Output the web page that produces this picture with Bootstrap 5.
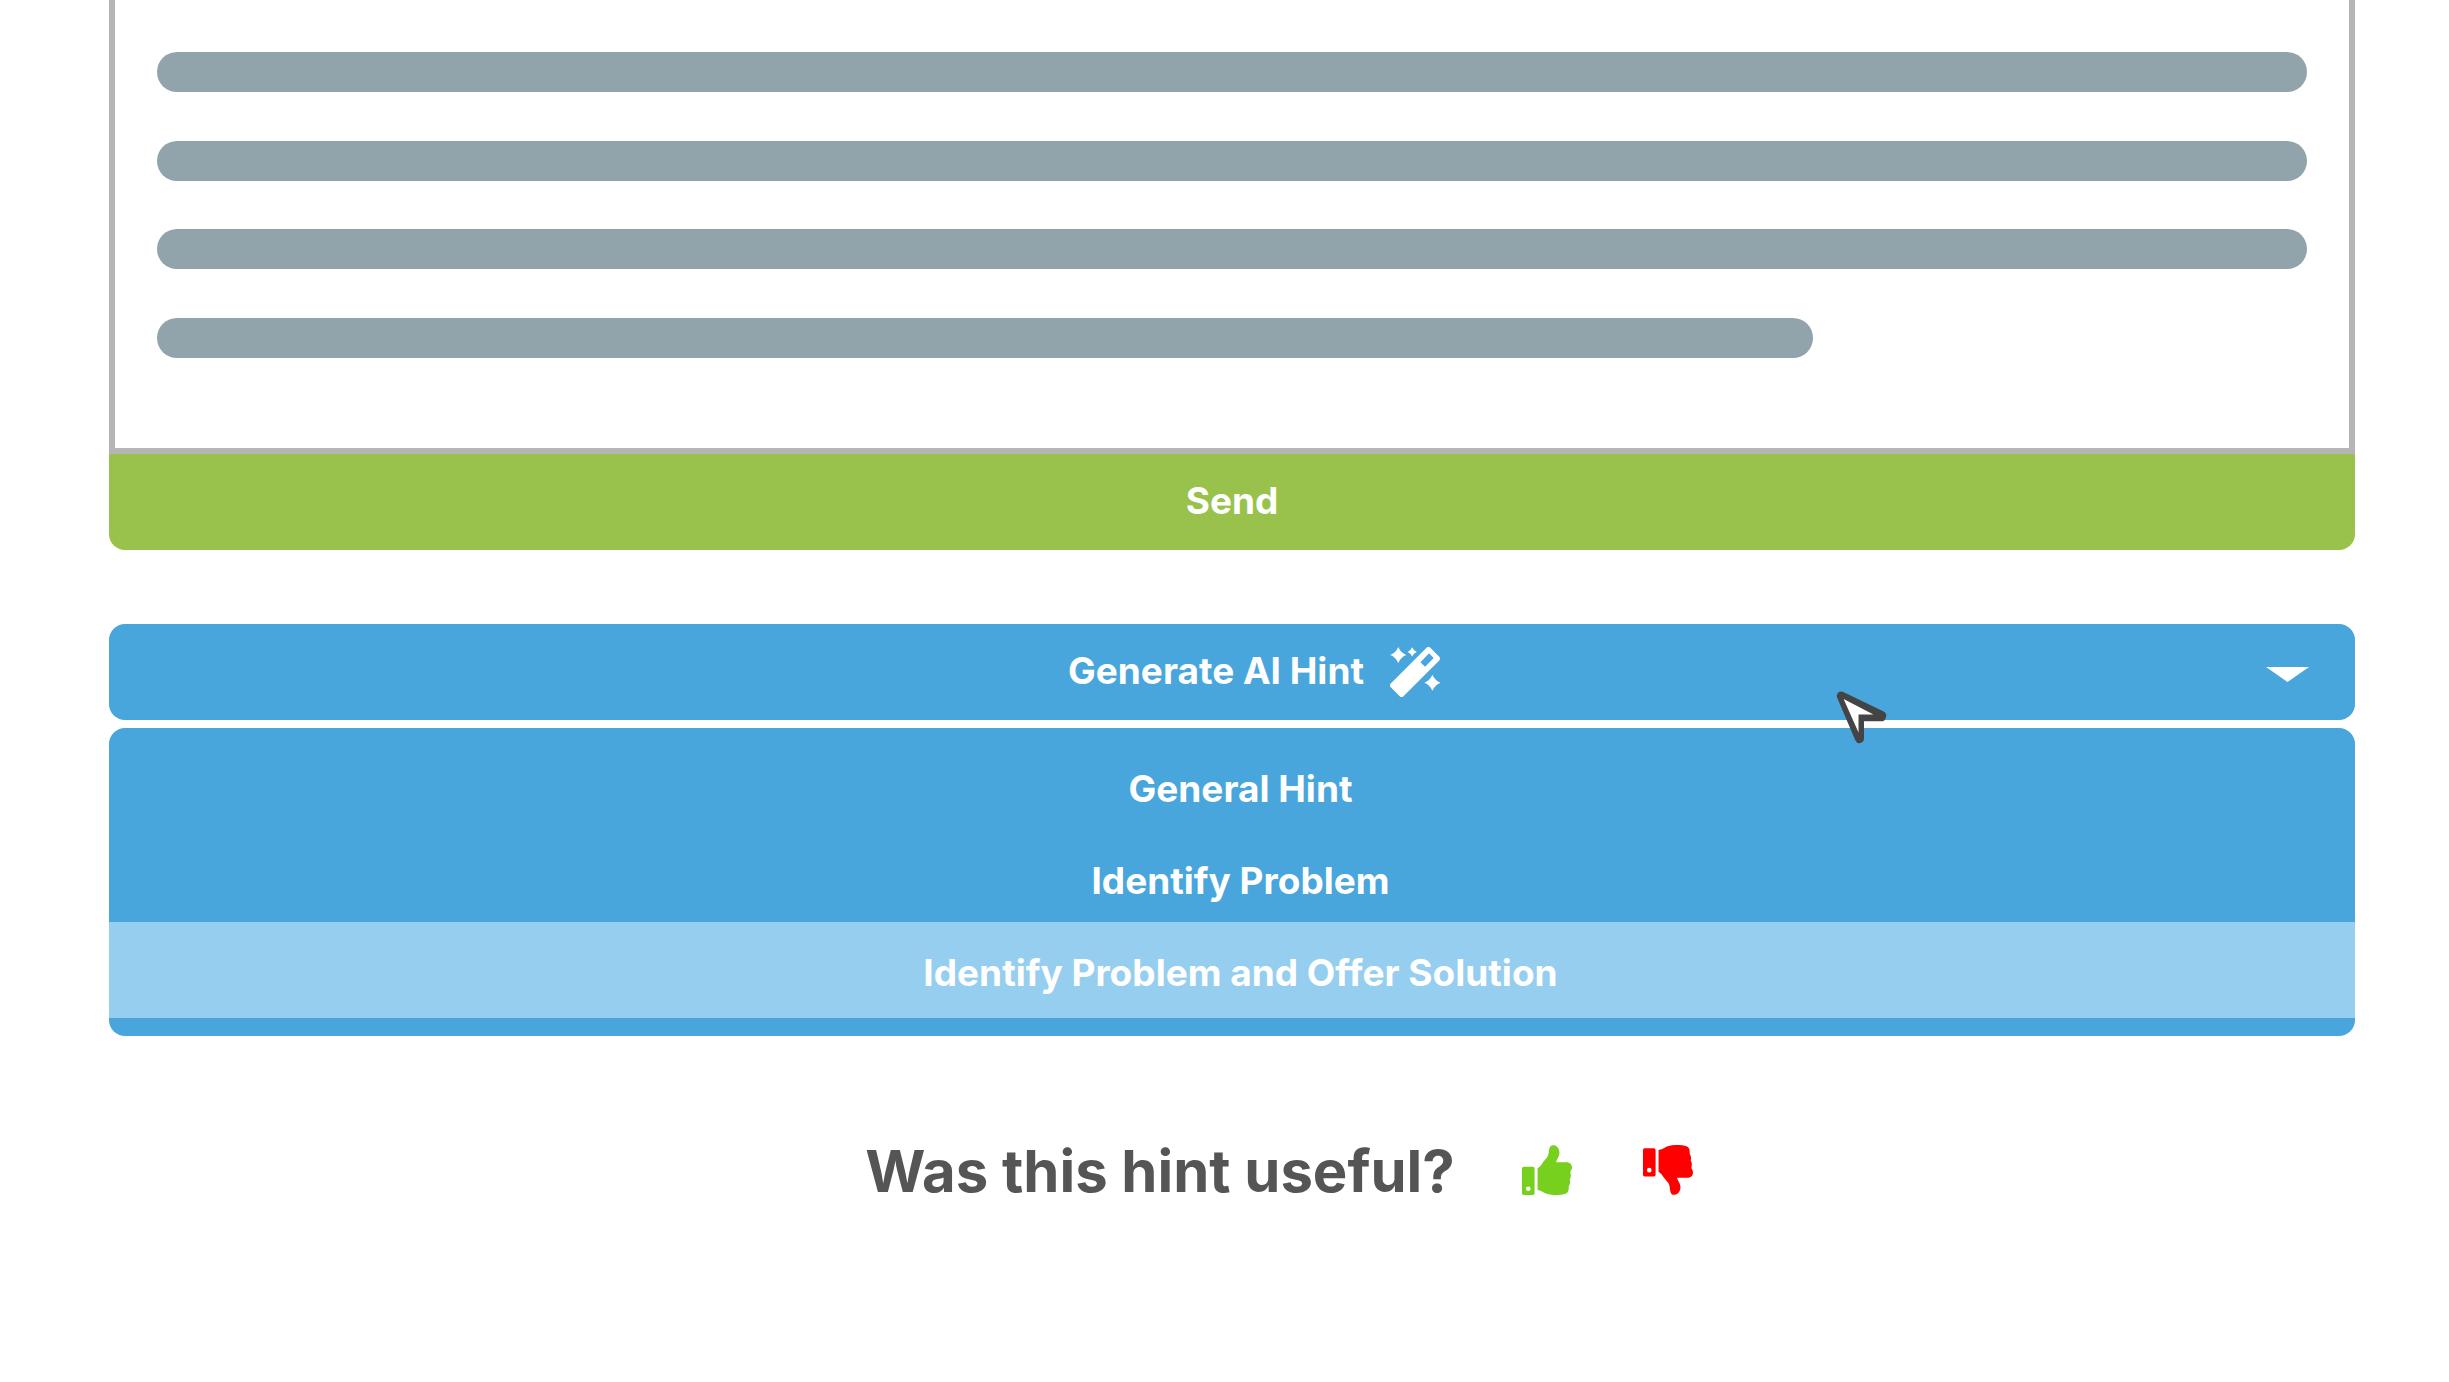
<!DOCTYPE html>
<html lang="en">
<head>
<meta charset="utf-8">
<meta name="viewport" content="width=device-width, initial-scale=1">
<title>AI Hint</title>
<link href="https://cdn.jsdelivr.net/npm/bootstrap@5.3.0/dist/css/bootstrap.min.css" rel="stylesheet">
<style>
  body { font-family: Inter, "Liberation Sans", sans-serif; font-weight: 700; color: #555; background: #fff; }
  .page { padding: 0 94px 0 109px; }
  .message { border: 6px solid #b5b5b5; border-top: 0; padding: 52px 42px 90px 42px; gap: 49px; }
  .line { height: 40px; background: #92a4ab; }
  .line:nth-child(n+3) { margin-top: -1px; }
  .line-short { width: 77%; }
  .line-short.line { margin-top: 0; }
  .bar { --bs-btn-font-size: 37px; --bs-btn-line-height: 44px; --bs-btn-font-weight: 700; --bs-btn-border-width: 0; --bs-btn-border-radius: 16px;
    --bs-btn-color: #fff; --bs-btn-hover-color: #fff; --bs-btn-active-color: #fff; padding: 25px 0 27px; }
  .bar-send { --bs-btn-bg: #98c24c; --bs-btn-hover-bg: #8bb441; --bs-btn-active-bg: #8bb441; border-radius: 0 0 16px 16px; }
  .bar-hint { --bs-btn-bg: #48a6dd; --bs-btn-hover-bg: #48a6dd; --bs-btn-active-bg: #48a6dd; padding-left: 44px; gap: 26px; }
  .hints { margin-top: 74px; }
  .wand { width: 50px; height: 50px; margin: -2px 0 -4px; }
  .caret { width: 43px; height: 15px; right: 46px; top: 43px; }
  .pointer { width: 51px; height: 53px; left: 77%; margin-left: -2px; top: 67px; z-index: 1001; pointer-events: none; }
  .hint-menu { --bs-dropdown-bg: #48a6dd; --bs-dropdown-border-width: 0; --bs-dropdown-border-radius: 16px; --bs-dropdown-font-size: 37px;
    --bs-dropdown-link-color: #fff; --bs-dropdown-link-hover-color: #fff; --bs-dropdown-link-hover-bg: #96ceef;
    --bs-dropdown-link-active-color: #fff; --bs-dropdown-link-active-bg: #96ceef; margin-top: 8px; padding: 10px 0 18px; }
  .hint-menu .dropdown-item { font-weight: 700; line-height: 82px; padding: 10px 0 0 17px; }
  .hint-menu .active { padding-bottom: 4px; }
  .feedback { margin-top: 100px; padding-left: 94px; gap: 67px; }
  .question { font-size: 58px; font-weight: 700; line-height: 70px; }
  .votes { gap: 71px; padding-bottom: 3px; }
  .vote { --bs-btn-padding-x: 0; --bs-btn-padding-y: 0; --bs-btn-border-width: 0; line-height: 0; }
  .vote svg { width: 50px; height: 50px; }
</style>
</head>
<body>
<main class="page">
  <section class="message d-flex flex-column" aria-label="Message">
    <div class="line rounded-pill"></div>
    <div class="line rounded-pill"></div>
    <div class="line rounded-pill"></div>
    <div class="line line-short rounded-pill"></div>
  </section>
  <button type="button" class="btn bar bar-send d-block w-100">Send</button>

  <section class="hints dropdown">
    <button type="button" class="btn bar bar-hint position-relative d-flex w-100 justify-content-center align-items-center" aria-expanded="true">
      <span>Generate AI Hint</span>
      <svg class="wand" viewBox="0 0 151 151" fill="#fff" aria-hidden="true">
        <path d="M8 116L116 8L143 35L35 143Z" stroke="#fff" stroke-width="16" stroke-linejoin="round"/>
        <path fill="#48a6dd" d="M118 19L132 33L106 60L92 46Z"/>
        <path d="M25 0Q32 17 49 24Q32 31 25 48Q18 31 1 24Q18 17 25 0Z"/>
        <path d="M67 1Q71 11 81 15Q71 19 67 29Q63 19 53 15Q63 11 67 1Z"/>
        <path d="M128 84Q135 101 152 108Q135 115 128 132Q121 115 104 108Q121 101 128 84Z"/>
      </svg>
      <svg class="caret position-absolute" viewBox="0 0 43 15" aria-hidden="true"><path fill="#fff" d="M0 0H43L21.5 15Z"/></svg>
    </button>
    <div class="dropdown-menu hint-menu position-static d-block w-100 text-center overflow-hidden">
      <button type="button" class="dropdown-item text-center">General Hint</button>
      <button type="button" class="dropdown-item text-center">Identify Problem</button>
      <button type="button" class="dropdown-item text-center active">Identify Problem and Offer Solution</button>
    </div>
    <svg class="pointer position-absolute" viewBox="50 32 152 160" aria-hidden="true">
      <path d="M65 47L187 106L186 110H120V176Z" fill="#444" stroke="#444" stroke-width="27" stroke-linejoin="round"/>
      <path d="M72 56L162 103H117V157Z" fill="#fff"/>
    </svg>
  </section>

  <section class="feedback d-flex justify-content-center align-items-center">
    <h2 class="question mb-0">Was this hint useful?</h2>
    <div class="votes d-flex">
      <button type="button" class="btn vote" aria-label="Yes">
        <svg viewBox="0 0 151 151" fill="#78d01e" aria-hidden="true">
          <path fill-rule="evenodd" d="M5 66H33Q38 66 38 71V146Q38 151 33 151H5Q0 151 0 146V71Q0 66 5 66ZM19 125A7 7 0 1 0 19 139A7 7 0 1 0 19 125Z"/>
          <path d="M47 70Q58 63 64 51L76 37C82 30 80 19 83 10C85 2 91 -1 97 1C108 3 114 14 113 26C112 37 104 44 103 52H134C146 52 151 60 151 68C151 76 146 78 146 83C149 92 147 100 144 104C147 113 144 120 141 124C142 139 139 146 129 148C113 152 96 152 80 149C69 147 60 138 47 136Z"/>
        </svg>
      </button>
      <button type="button" class="btn vote" aria-label="No">
        <svg viewBox="0 0 151 151" fill="#f00" aria-hidden="true">
          <path fill-rule="evenodd" d="M5 10H33Q38 10 38 15V90Q38 95 33 95H5Q0 95 0 90V15Q0 10 5 10ZM19 69A7 7 0 1 0 19 83A7 7 0 1 0 19 69Z"/>
          <path d="M47 81Q58 88 64 100L76 114C82 121 80 132 83 141C85 149 91 152 97 150C108 148 114 137 113 125C112 114 104 107 103 99H134C146 99 151 91 151 83C151 75 146 73 146 68C149 59 147 51 144 47C147 38 144 31 141 27C142 12 139 5 129 3C113 -1 96 -1 80 2C69 4 60 13 47 15Z"/>
        </svg>
      </button>
    </div>
  </section>
</main>
<script src="https://cdn.jsdelivr.net/npm/bootstrap@5.3.0/dist/js/bootstrap.bundle.min.js"></script>
</body>
</html>
